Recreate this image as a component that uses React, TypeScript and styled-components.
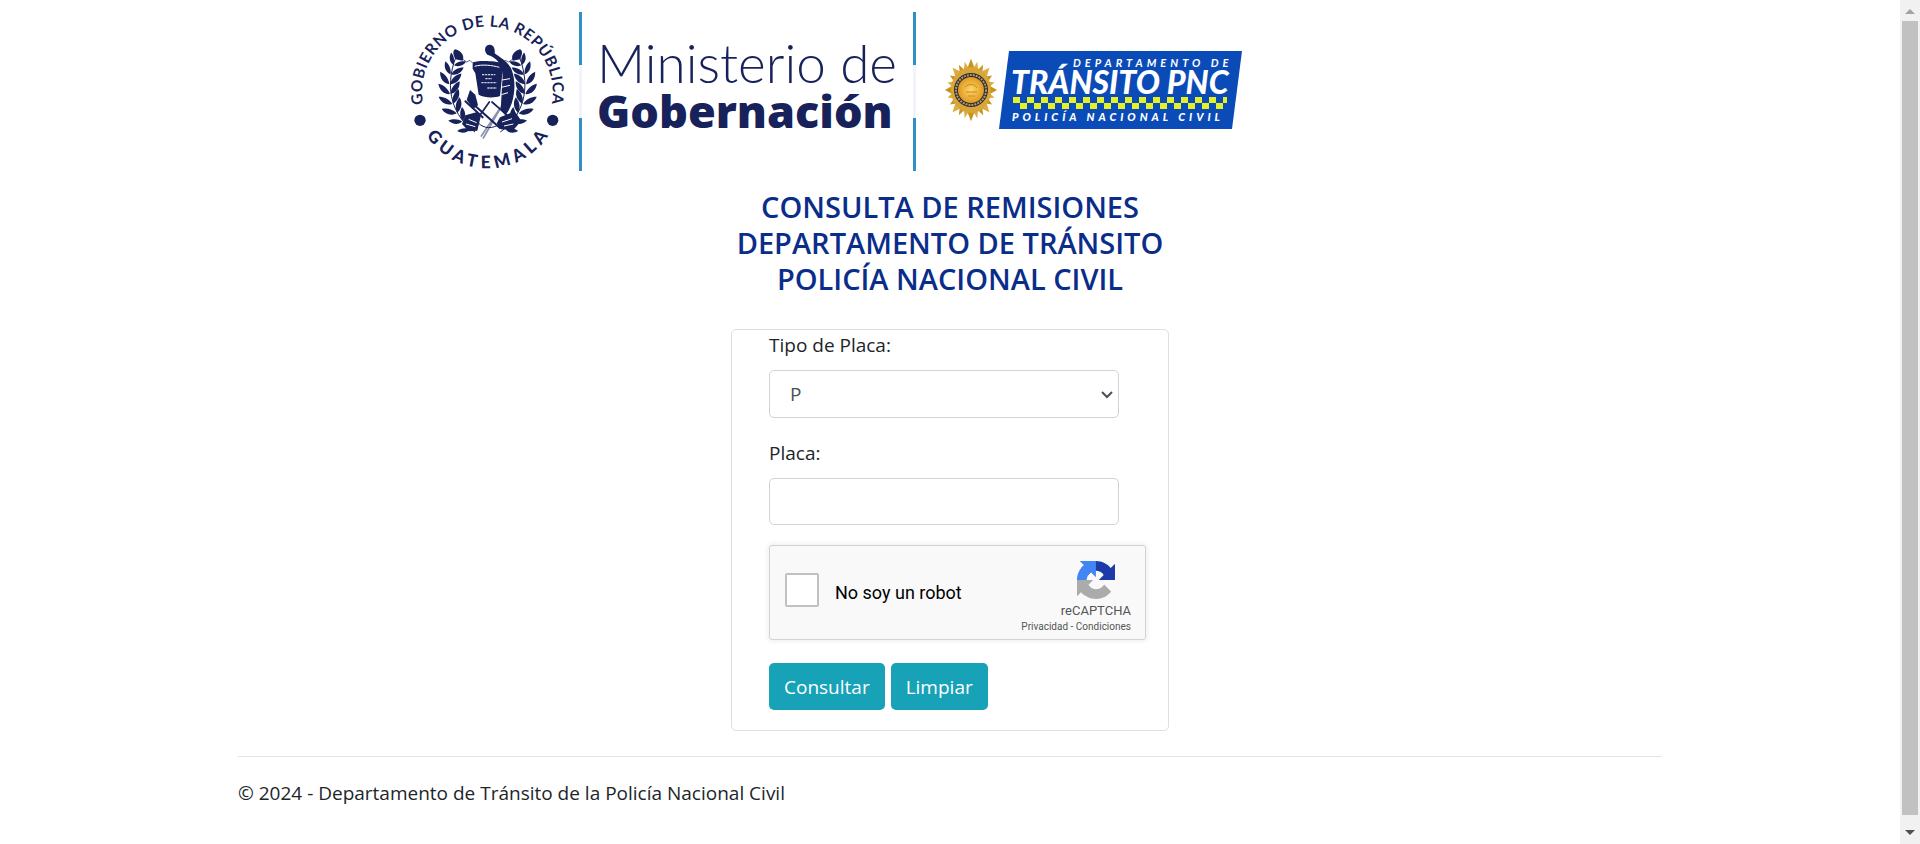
import React from "react";
import styled, { createGlobalStyle } from "styled-components";

const NAVY = "#17215a";
const SANS = `"Segoe UI", "Open Sans", "Noto Sans", sans-serif`;
const LOGO = `Lato, "Open Sans", sans-serif`;

const GlobalStyle = createGlobalStyle`
  *, *::before, *::after { box-sizing: border-box; }
  body {
    margin: 0;
    background: #fff;
    color: #212529;
    font-family: ${SANS};
    font-size: 19px;
    line-height: 30px;
  }
`;

const Page = styled.div`
  display: flex;
  align-items: flex-start;
  min-height: 100vh;
`;

const Content = styled.div`
  flex: 1;
  min-width: 0;
`;

const Container = styled.div`
  max-width: 1424px;
  margin: 0 auto;
`;

const Header = styled.header`
  display: flex;
  align-items: flex-start;
  padding: 0 0 9px 162px;
`;

const EmblemSvg = styled.svg`
  flex: none;
  width: 179px;
  height: 180px;
`;

const FlagBar = styled.span`
  flex: none;
  width: 3px;
  height: 159px;
  margin-top: 12px;
  background: linear-gradient(#2f8fc6 0 53px, #f0f4fa 53px 106px, #2f8fc6 106px);
`;

const Wordmark = styled.div`
  flex: none;
  width: 331px;
  padding: 37px 0 0 15px;
  color: ${NAVY};
  font-family: ${LOGO};
  white-space: nowrap;
`;

const WordLight = styled.div`
  font-size: 53px;
  font-weight: 300;
  line-height: 52px;
`;

const WordHeavy = styled.div`
  font-family: "Open Sans", sans-serif;
  font-size: 45px;
  font-weight: 800;
  line-height: 44px;
`;

const TransitSvg = styled.svg`
  flex: none;
  width: 344px;
  height: 180px;
`;

const Title = styled.h1`
  margin: 0 0 32px;
  color: #0b2d8a;
  font-size: 29px;
  font-weight: 600;
  line-height: 36px;
  text-align: center;
`;

const Card = styled.form`
  width: 438px;
  max-width: 100%;
  margin: 0 auto;
  padding: 0 20px 20px 37px;
  border: 1px solid #dfdfdf;
  border-radius: 5px;
`;

const Field = styled.div`
  width: 350px;
  max-width: 100%;
  margin-bottom: 20px;
`;

const Label = styled.label`
  display: block;
  margin-bottom: 10px;
`;

const SelectBox = styled.div`
  position: relative;
`;

const Select = styled.select`
  display: block;
  width: 100%;
  height: 48px;
  padding: 0 20px;
  appearance: none;
  border: 1px solid #ced4da;
  border-radius: 5px;
  background: #fff;
  color: #495057;
  font: inherit;
`;

const Chevron = styled.svg`
  position: absolute;
  top: 20px;
  right: 6px;
  width: 12px;
  height: 9px;
  pointer-events: none;
`;

const TextInput = styled.input`
  display: block;
  width: 100%;
  height: 47px;
  padding: 8px 15px;
  border: 1px solid #ced4da;
  border-radius: 5px;
  background: #fff;
  color: #495057;
  font: inherit;
`;

const Captcha = styled.div`
  display: flex;
  width: 377px;
  height: 95px;
  margin-bottom: 23px;
  padding-right: 14px;
  border: 1px solid #d3d3d3;
  border-radius: 3px;
  background: #f9f9f9;
  box-shadow: 0 0 5px 1px rgba(0, 0, 0, 0.08);
  font-family: Roboto, sans-serif;
`;

const RobotLabel = styled.label`
  display: flex;
  flex: 1;
  align-items: center;
  gap: 16px;
  padding-left: 15px;
  color: #000;
  font-size: 18px;
  line-height: 20px;
`;

const RobotCheck = styled.input`
  width: 34px;
  height: 34px;
  margin: 0 0 6px;
  appearance: none;
  border: 2px solid #c1c1c1;
  border-radius: 2px;
  background: #fff;
`;

const CaptchaBrand = styled.div`
  display: flex;
  flex-direction: column;
  align-items: flex-end;
  padding-top: 15px;
  color: #555;
`;

const CaptchaLogo = styled.svg`
  width: 38px;
  height: 38px;
  margin-right: 16px;
`;

const CaptchaName = styled.div`
  margin-top: 3px;
  font-size: 13px;
  line-height: 17px;
`;

const CaptchaLinks = styled.div`
  font-size: 10px;
  line-height: 16px;
`;

const CaptchaLink = styled.a`
  color: #555;
  text-decoration: none;
`;

const Actions = styled.div`
  display: flex;
  gap: 6px;
`;

const Button = styled.button`
  height: 47px;
  padding: 0 15px;
  border: 0;
  border-radius: 5px;
  background: #17a2b8;
  color: #fff;
  font: inherit;
`;

const Footer = styled.footer`
  margin-top: 25px;
  padding: 21px 0 36px;
  border-top: 1px solid #e3e3e3;
`;

const ScrollTrack = styled.div`
  display: flex;
  position: sticky;
  top: 0;
  flex: none;
  flex-direction: column;
  align-items: center;
  width: 20px;
  height: 100vh;
  background: #f1f1f1;
`;

const ScrollThumb = styled.div`
  flex: 1;
  width: 16px;
  background: #c1c1c1;
`;

const ScrollArrow = styled.svg<{ $tall?: boolean }>`
  flex: none;
  width: 20px;
  height: ${(p) => (p.$tall ? 29 : 21)}px;
`;

type Leaf = { x: number; y: number; a: number; s: number };

const leftLeaves: Leaf[] = [
  { x: 206, y: 386, a: -62, s: 0.9 },
  { x: 184, y: 362, a: -50, s: 1 },
  { x: 167, y: 336, a: -38, s: 1.1 },
  { x: 155, y: 308, a: -26, s: 1.1 },
  { x: 149, y: 278, a: -12, s: 1.1 },
  { x: 148, y: 248, a: 0, s: 1.1 },
  { x: 153, y: 219, a: 14, s: 1 },
  { x: 162, y: 192, a: 26, s: 0.9 },
];

function Branch() {
  return (
    <g fill={NAVY}>
      <path d="M225 396C160 350 130 270 168 170" fill="none" stroke={NAVY} strokeWidth="3" />
      {leftLeaves.map((l) => (
        <g key={l.y} transform={`translate(${l.x} ${l.y}) rotate(${l.a}) scale(${l.s})`}>
          <path d="M0 4C-16 2 -26 -12 -25 -30C-12 -24 -2 -12 0 4Z" />
          <path d="M2 4C18 4 31 -8 33 -25C18 -22 5 -12 2 4Z" />
        </g>
      ))}
      <path d="M166 178C158 162 158 152 166 148C184 154 194 166 188 182Z" />
      <path d="M186 176l14 10 10 -5 8 8" fill="none" stroke={NAVY} strokeWidth="2" />
    </g>
  );
}

function Emblem() {
  return (
    <EmblemSvg viewBox="0 0 537 540" role="img" aria-label="Gobierno de la República, Guatemala">
      <defs>
        <path id="arc-top" d="M69 309.9A196 196 0 1 1 455 309.9" />
        <path id="arc-bottom" d="M42 285A220 220 0 0 0 482 285" />
      </defs>
      <g fill={NAVY} fontFamily={LOGO} fontWeight="700" textAnchor="middle">
        <text fontSize="46" letterSpacing="2">
          <textPath href="#arc-top" startOffset="50%">GOBIERNO DE LA REPÚBLICA</textPath>
        </text>
        <text fontSize="52" fontWeight="900" letterSpacing="14">
          <textPath href="#arc-bottom" startOffset="51%">GUATEMALA</textPath>
        </text>
      </g>
      <circle cx="60" cy="361" r="17" fill={NAVY} />
      <circle cx="458" cy="361" r="17" fill={NAVY} />
      <Branch />
      <g transform="translate(526 0) scale(-1 1)">
        <Branch />
      </g>
      <g stroke={NAVY} fill="none" strokeLinecap="round">
        <path d="M318 296L250 414M302 322L244 408" stroke="#8a90ae" strokeWidth="5" />
        <path d="M206 296L226 318L300 384M196 304L248 352" strokeWidth="6" />
        <path d="M268 306L232 356M276 306L340 362" strokeWidth="5" />
        <path d="M236 370C252 386 276 388 300 372" strokeWidth="3" />
      </g>
      <g fill={NAVY}>
        <path d="M196 346L232 336L242 350L232 392L206 394L186 372Z" />
        <path d="M300 352L344 334L364 362L340 390L302 388L290 370Z" />
        <path d="M210 270L226 284L234 316L220 326L200 300Z" />
        <path d="M268 134C252 136 252 154 262 164C292 172 306 196 308 226L302 330L316 346C344 312 350 250 336 212C326 184 298 172 284 160C286 144 280 134 268 134Z" />
        <path d="M218 188C226 180 292 182 304 190L308 212L300 288C278 296 252 292 236 284L226 220L218 206Z" />
      </g>
      <path d="M224 199C246 192 278 196 298 202" stroke="#fff" strokeWidth="3" fill="none" />
      <path d="M306 240L330 236M304 262L330 256M304 284L324 278M206 358L230 368M198 372L226 380M306 366L336 356M312 378L340 372" stroke="#fff" strokeWidth="3" />
      <path d="M246 224H286M256 236H276M244 248H290M262 264H290" stroke="#c9cde0" strokeWidth="4" strokeDasharray="7 2" />
    </EmblemSvg>
  );
}

const rays = Array.from({ length: 24 }, (_, i) => i * 15);

function TransitLogo() {
  return (
    <TransitSvg viewBox="0 0 344 180" role="img" aria-label="Departamento de Tránsito PNC">
      <defs>
        <radialGradient id="gold">
          <stop offset="0" stopColor="#ffd76a" />
          <stop offset="1" stopColor="#e09a20" />
        </radialGradient>
        <pattern id="checks" x="97" y="97" width="14" height="12" patternUnits="userSpaceOnUse">
          <rect width="7" height="6" fill="#e3f02a" />
          <rect x="7" y="6" width="7" height="6" fill="#e3f02a" />
        </pattern>
      </defs>
      <g transform="translate(55 90)">
        {rays.map((a) => (
          <path
            key={a}
            d={a % 45 === 0 ? "M-5 -18L0 -29L5 -18Z" : "M-4 -17L0 -27L4 -17Z"}
            transform={`scale(0.9 1.08) rotate(${a})`}
            fill={a % 30 === 0 ? "#c9921f" : "#dcae42"}
          />
        ))}
        <ellipse rx="20" ry="23" fill="#d8a637" />
        <circle r="17" fill="#2d2a3c" />
        <circle r="15" fill="none" stroke="#b49a5c" strokeWidth="2" strokeDasharray="2 1" />
        <circle r="13" fill="url(#gold)" />
        <path d="M-6 -3C-2 -7 4 -6 6 -2M-5 2H6M-3 6H4" stroke="#c98a25" strokeWidth="1" fill="none" />
      </g>
      <path d="M93 51H326L316 129H83Z" fill="#0a4bb8" />
      <g fill="#fff" fontFamily={LOGO} fontStyle="italic">
        <text x="157" y="67" fontSize="11" fontWeight="700" letterSpacing="4">DEPARTAMENTO DE</text>
        <text x="95" y="94" fontSize="32" fontWeight="900">TRÁNSITO PNC</text>
        <text x="96" y="121" fontSize="11" fontWeight="900" letterSpacing="4">POLICÍA NACIONAL CIVIL</text>
      </g>
      <rect x="97" y="97" width="214" height="12" fill="url(#checks)" />
    </TransitSvg>
  );
}

function Scrollbar() {
  return (
    <ScrollTrack aria-hidden="true">
      <ScrollArrow viewBox="0 0 20 21">
        <path d="M5 14L10 9L15 14Z" fill="#a3a3a3" />
      </ScrollArrow>
      <ScrollThumb />
      <ScrollArrow $tall viewBox="0 0 20 29">
        <path d="M5 15L10 20L15 15Z" fill="#505050" />
      </ScrollArrow>
    </ScrollTrack>
  );
}

export default function App() {
  return (
    <Page>
      <GlobalStyle />
      <Content>
        <Container>
          <Header>
            <Emblem />
            <FlagBar />
            <Wordmark>
              <WordLight>Ministerio de</WordLight>
              <WordHeavy>Gobernación</WordHeavy>
            </Wordmark>
            <FlagBar />
            <TransitLogo />
          </Header>
          <main>
            <Title>
              CONSULTA DE REMISIONES
              <br />
              DEPARTAMENTO DE TRÁNSITO
              <br />
              POLICÍA NACIONAL CIVIL
            </Title>
            <Card onSubmit={(e) => e.preventDefault()}>
              <Field>
                <Label htmlFor="tipo">Tipo de Placa:</Label>
                <SelectBox>
                  <Select id="tipo" defaultValue="P">
                    <option value="P">P</option>
                  </Select>
                  <Chevron viewBox="0 0 12 9" aria-hidden="true">
                    <path d="M1 2L6 7L11 2" fill="none" stroke="#495057" strokeWidth="2" />
                  </Chevron>
                </SelectBox>
              </Field>
              <Field>
                <Label htmlFor="placa">Placa:</Label>
                <TextInput id="placa" type="text" />
              </Field>
              <Captcha>
                <RobotLabel>
                  <RobotCheck type="checkbox" />
                  No soy un robot
                </RobotLabel>
                <CaptchaBrand>
                  <CaptchaLogo viewBox="0 0 64 64" aria-hidden="true">
                    <path
                      fill="#1c3aa9"
                      d="M64 31.955l-.033-1.37V4.687l-7.16 7.16C50.948 4.674 42.033.093 32.05.093c-10.4 0-19.622 4.96-25.458 12.64l11.736 11.86a15.55 15.55 0 0 1 4.754-5.334c2.05-1.6 4.952-2.906 8.968-2.906.485 0 .86.057 1.135.163 4.976.393 9.288 3.14 11.828 7.124l-8.307 8.307L64 31.953"
                    />
                    <path
                      fill="#4285f4"
                      d="M31.862.094l-1.37.033H4.594l7.16 7.16C4.58 13.147 0 22.06 0 32.046c0 10.4 4.96 19.622 12.64 25.458L24.5 45.768a15.55 15.55 0 0 1-5.334-4.754c-1.6-2.05-2.906-4.952-2.906-8.968 0-.485.057-.86.163-1.135.393-4.976 3.14-9.288 7.124-11.828l8.307 8.307L31.86.095"
                    />
                    <path
                      fill="#ababab"
                      d="M.001 32.045l.033 1.37v25.898l7.16-7.16c5.86 7.173 14.774 11.754 24.76 11.754 10.4 0 19.622-4.96 25.458-12.64l-11.736-11.86a15.55 15.55 0 0 1-4.754 5.334c-2.05 1.6-4.952 2.906-8.968 2.906-.485 0-.86-.057-1.135-.163-4.976-.393-9.288-3.14-11.828-7.124l8.307-8.307c-10.522.04-22.4.066-27.295-.005"
                    />
                  </CaptchaLogo>
                  <CaptchaName>reCAPTCHA</CaptchaName>
                  <CaptchaLinks>
                    <CaptchaLink href="#privacidad">Privacidad</CaptchaLink>
                    {" - "}
                    <CaptchaLink href="#condiciones">Condiciones</CaptchaLink>
                  </CaptchaLinks>
                </CaptchaBrand>
              </Captcha>
              <Actions>
                <Button type="submit">Consultar</Button>
                <Button type="reset">Limpiar</Button>
              </Actions>
            </Card>
          </main>
          <Footer>© 2024 - Departamento de Tránsito de la Policía Nacional Civil</Footer>
        </Container>
      </Content>
      <Scrollbar />
    </Page>
  );
}
